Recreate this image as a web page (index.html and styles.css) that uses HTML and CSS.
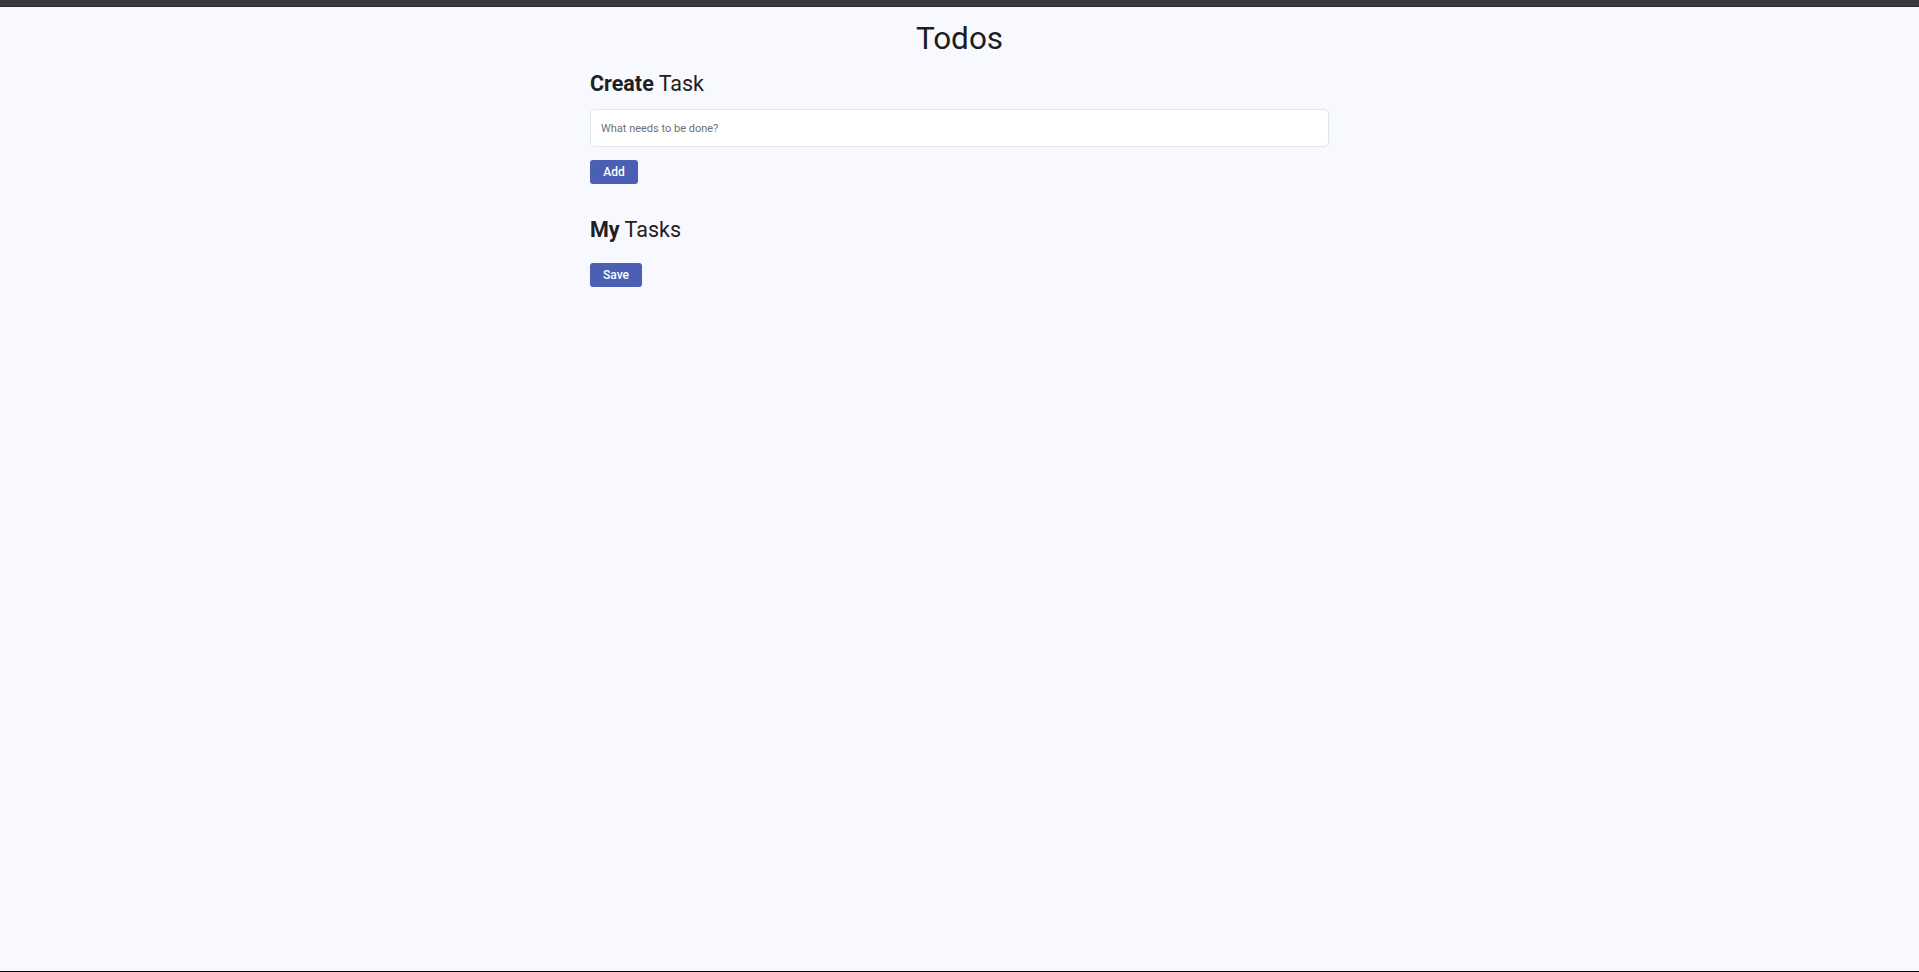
FILE: index.html
```html
<!DOCTYPE html>
<html lang="en">
<head>
<meta charset="utf-8">
<title>Todos</title>
<link rel="stylesheet" href="styles.css">
</head>
<body>
<div class="topbar"></div>
<main class="page">
  <h1 class="title">Todos</h1>
  <section class="create">
    <h2 class="heading"><strong>Create</strong> Task</h2>
    <input class="task-input" type="text" placeholder="What needs to be done?">
    <button class="btn btn-add" type="button">Add</button>
  </section>
  <section class="tasks">
    <h2 class="heading"><strong>My</strong> Tasks</h2>
    <button class="btn btn-save" type="button">Save</button>
  </section>
</main>
<div class="bottomline"></div>
</body>
</html>
```
FILE: styles.css
```css
html, body {
  margin: 0;
  padding: 0;
  height: 100%;
}
body {
  background: #f8f9fe;
  font-family: Roboto, "Liberation Sans", sans-serif;
  color: #1e2024;
  display: flex;
  flex-direction: column;
  min-height: 972px;
  box-sizing: border-box;
}
.topbar {
  height: 7px;
  background: #3a393f;
  border-bottom: 1px solid #2a292e;
  box-sizing: border-box;
  flex: none;
}
.page {
  flex: 1;
  width: 739px;
  margin: 0 auto;
  display: flex;
  flex-direction: column;
  align-items: flex-start;
}
.title {
  align-self: center;
  margin: 13px 0 0;
  font-size: 31.5px;
  line-height: 38px;
  font-weight: 400;
  color: #1b1d21;
}
.create, .tasks {
  display: flex;
  flex-direction: column;
  align-items: flex-start;
  width: 100%;
}
.create {
  margin-top: 13px;
}
.tasks {
  margin-top: 33px;
}
.heading {
  margin: 0;
  font-size: 21.5px;
  line-height: 26px;
  font-weight: 400;
  color: #1e2024;
}
.heading strong {
  font-weight: 700;
}
.task-input {
  margin-top: 12px;
  width: 100%;
  height: 38px;
  box-sizing: border-box;
  border: 1px solid #e1e4ea;
  border-radius: 5px;
  background: #ffffff;
  padding: 0 10px;
  font-family: Roboto, "Liberation Sans", sans-serif;
  font-size: 11px;
  color: #333;
  outline: none;
}
.task-input::placeholder {
  color: #6e6f78;
}
.btn {
  height: 24px;
  box-sizing: border-box;
  border: none;
  border-radius: 3px;
  background: #4a60b4;
  color: #ffffff;
  font-family: Roboto, "Liberation Sans", sans-serif;
  font-size: 12px;
  font-weight: 500;
  padding: 0;
  cursor: pointer;
}
.btn-add {
  margin-top: 13px;
  width: 48px;
}
.btn-save {
  margin-top: 20px;
  width: 52px;
}
.bottomline {
  height: 1px;
  background: #000;
  flex: none;
}
```
